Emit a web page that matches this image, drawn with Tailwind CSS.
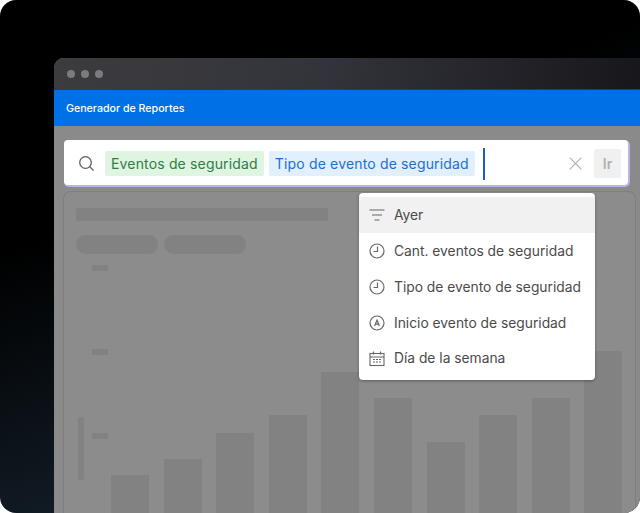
<!DOCTYPE html>
<html lang="es">
<head>
<meta charset="utf-8">
<script src="https://cdn.jsdelivr.net/npm/@tailwindcss/browser@4"></script>
</head>
<body class="w-[640px] h-[513px] overflow-hidden bg-white font-['Inter','Liberation_Sans',sans-serif]">
<div class="h-[513px] rounded-[16px] overflow-hidden pt-[58px] pl-[54px] bg-[linear-gradient(160deg,#000_34%,#131e28_76%)]">
  <div class="w-[600px] h-[455px] rounded-tl-[10px] overflow-hidden bg-[#8a8a8a] flex flex-col">
    <div class="h-[32px] shrink-0 bg-[linear-gradient(100deg,#3c3c3f_0%,#33343b_45%,#16151a_100%)] border-b border-[#3a3a3d] flex items-center gap-[6px] pl-[13px]">
      <span class="w-2 h-2 rounded-full bg-[#7c7c7e]"></span>
      <span class="w-2 h-2 rounded-full bg-[#7c7c7e]"></span>
      <span class="w-2 h-2 rounded-full bg-[#7c7c7e]"></span>
    </div>
    <div class="h-[36px] shrink-0 bg-[#0070e6] flex items-center pt-[1px] pl-[12px] text-white text-[10.65px] font-medium">Generador de Reportes</div>
    <div class="relative flex-1 px-[10px] pt-[14px]">
      <div class="relative z-10 w-[564px] h-[45px] bg-white rounded-[4px] shadow-[1px_1px_0_1px_#b7b5e6] flex items-center pt-[2px] pl-[14px] pr-[7px]">
        <svg class="w-[17px] h-[17px] shrink-0 text-[#5f5f5f]" viewBox="0 0 17 17" fill="none" stroke="currentColor" stroke-width="1.3"><circle cx="7.5" cy="7.5" r="5.8"/><path d="M11.8 11.8 15.6 15.6"/></svg>
        <span class="ml-[10px] h-[25px] px-[6px] flex items-center bg-[#dff5e2] rounded-[2px] text-[#2f7d46] text-[14px] tracking-[0.16px] whitespace-nowrap">Eventos de seguridad</span>
        <span class="ml-[5px] h-[25px] px-[6px] flex items-center bg-[#e2f0fd] rounded-[2px] text-[#1a6fd6] text-[14px] tracking-[0.16px] whitespace-nowrap">Tipo de evento de seguridad</span>
        <span class="ml-[8px] w-[2px] h-[32px] bg-[#1a5fc0]"></span>
        <svg class="ml-auto w-[13px] h-[13px] text-[#b3b3b3]" viewBox="0 0 13 13" fill="none" stroke="currentColor" stroke-width="1.2"><path d="M0.7 0.7 12.3 12.3M12.3 0.7 0.7 12.3"/></svg>
        <span class="ml-[12px] w-[27px] h-[29px] rounded-[2px] bg-[#f0f0f0] text-[#b0b0b0] text-[14px] font-semibold flex items-center justify-center">Ir</span>
      </div>
      <div class="absolute left-[9px] top-[65px] w-[573px] h-[330px] rounded-[8px] border-l border-r border-t border-[#7f7f7f] bg-[#8c8c8c] px-[12px] pt-[16px]">
        <div class="w-[252px] h-[13px] rounded-[2px] bg-[#828282]"></div>
        <div class="flex gap-[6px] mt-[14px]">
          <span class="w-[82px] h-[19px] rounded-full bg-[#828282]"></span>
          <span class="w-[82px] h-[19px] rounded-full bg-[#828282]"></span>
        </div>
        <div class="flex h-[248px] mt-[11px] items-end">
          <div class="ml-[2px] w-[6px] h-[63px] self-start mt-[152px] rounded-[2px] bg-[#828282]"></div>
          <div class="ml-[8px] w-[16px] self-start flex flex-col gap-[78px]">
            <span class="h-[6px] rounded-[1px] bg-[#828282]"></span>
            <span class="h-[6px] rounded-[1px] bg-[#828282]"></span>
            <span class="h-[6px] rounded-[1px] bg-[#828282]"></span>
          </div>
          <div class="ml-[3px] flex items-end gap-[14.6px]">
            <span class="w-[38px] h-[38px] bg-[#828282]"></span>
            <span class="w-[38px] h-[54px] bg-[#828282]"></span>
            <span class="w-[38px] h-[80px] bg-[#828282]"></span>
            <span class="w-[38px] h-[98px] bg-[#828282]"></span>
            <span class="w-[38px] h-[141px] bg-[#828282]"></span>
            <span class="w-[38px] h-[115px] bg-[#828282]"></span>
            <span class="w-[38px] h-[71px] bg-[#828282]"></span>
            <span class="w-[38px] h-[98px] bg-[#828282]"></span>
            <span class="w-[38px] h-[115px] bg-[#828282]"></span>
            <span class="w-[38px] h-[162px] bg-[#828282]"></span>
          </div>
        </div>
      </div>
      <div class="absolute z-20 left-[305px] top-[67px] w-[236px] h-[187px] bg-white rounded-[4px] shadow-[0_1px_3px_rgba(0,0,0,0.35)] pt-[4px] text-[13.8px] text-[#4a4a4a]">
        <div class="h-[36px] bg-[#f1f1f1] flex items-center pl-[10px] gap-[9px]">
          <svg class="w-[16px] h-[14px] text-[#666]" viewBox="0 0 16 14" fill="none" stroke="currentColor" stroke-width="1.2"><path d="M0.5 2H15.5M3 7H13M5.5 12H10.5"/></svg>
          <span>Ayer</span>
        </div>
        <div class="h-[35.75px] pt-[1px] flex items-center pl-[10px] gap-[9px]">
          <svg class="w-[16px] h-[16px] text-[#666]" viewBox="0 0 16 16" fill="none" stroke="currentColor" stroke-width="1.2"><circle cx="8" cy="8" r="7"/><path d="M8.5 3.5V8.5H4.5"/></svg>
          <span>Cant. eventos de seguridad</span>
        </div>
        <div class="h-[35.75px] pt-[1px] flex items-center pl-[10px] gap-[9px]">
          <svg class="w-[16px] h-[16px] text-[#666]" viewBox="0 0 16 16" fill="none" stroke="currentColor" stroke-width="1.2"><circle cx="8" cy="8" r="7"/><path d="M8.5 3.5V8.5H4.5"/></svg>
          <span>Tipo de evento de seguridad</span>
        </div>
        <div class="h-[35.75px] pt-[1px] flex items-center pl-[10px] gap-[9px]">
          <svg class="w-[16px] h-[16px] text-[#666]" viewBox="0 0 16 16" fill="none" stroke="currentColor" stroke-width="1.2"><circle cx="8" cy="8" r="7"/><path d="M5.6 11 8 5l2.4 6M6.4 9.2h3.2"/></svg>
          <span>Inicio evento de seguridad</span>
        </div>
        <div class="h-[35.75px] pt-[1px] flex items-center pl-[10px] gap-[9px]">
          <svg class="w-[16px] h-[16px] text-[#666]" viewBox="0 0 16 16" fill="none" stroke="currentColor" stroke-width="1.1"><rect x="1" y="2.5" width="14" height="12"/><path d="M1 6H15M4.5 0.5V3.5M11.5 0.5V3.5"/><path d="M4 8.5h2M7 8.5h2M10 8.5h2M4 11h2M7 11h2M10 11h2" stroke-width="1"/></svg>
          <span>Día de la semana</span>
        </div>
      </div>
    </div>
  </div>
</div>
</body>
</html>
